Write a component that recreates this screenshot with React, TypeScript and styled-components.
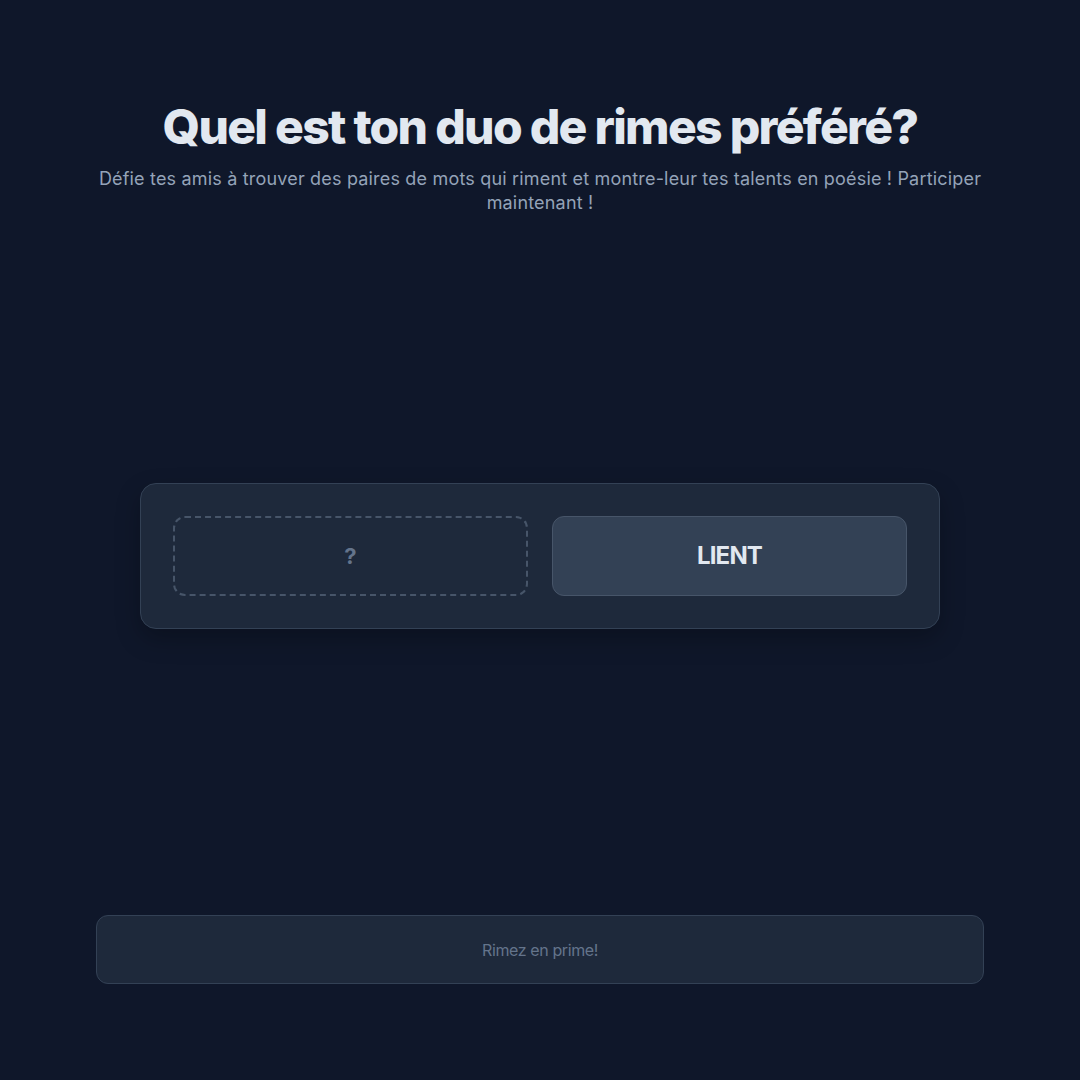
import React from "react";
import styled, { createGlobalStyle } from "styled-components";

const Global = createGlobalStyle`
  html, body { margin: 0; padding: 0; background: #0f172a; }
  body { font-family: Inter, "Noto Sans", sans-serif; }
  * { box-sizing: border-box; }
`;

const Page = styled.div`
  min-height: 1080px;
  display: flex;
  flex-direction: column;
  padding: 97px 96px 96px;
`;

const Header = styled.header`
  display: flex;
  flex-direction: column;
  align-items: center;
  text-align: center;
  gap: 10px;
`;

const Title = styled.h1`
  margin: 0;
  font-size: 48px;
  line-height: 60px;
  font-weight: 800;
  letter-spacing: -1.7px;
  color: #e2e8f0;
`;

const Subtitle = styled.p`
  margin: 0;
  font-size: 18px;
  line-height: 24px;
  letter-spacing: 0.18px;
  color: #94a3b8;
`;

const Main = styled.main`
  flex: 1;
  display: flex;
  align-items: center;
  justify-content: center;
  padding-bottom: 19px;
`;

const Card = styled.div`
  width: 800px;
  padding: 32px;
  display: grid;
  grid-template-columns: 1fr 1fr;
  gap: 24px;
  background: #1e293b;
  border: 1px solid #334155;
  border-radius: 16px;
  box-shadow: 0 10px 25px rgba(0, 0, 0, 0.25);
`;

const Slot = styled.div<{ $filled?: boolean }>`
  height: 80px;
  display: flex;
  align-items: center;
  justify-content: center;
  border-radius: 12px;
  font-weight: 700;
  background: ${(p) => (p.$filled ? "#334155" : "#1e293b")};
  border: ${(p) => (p.$filled ? "1px solid #475569" : "2px dashed #475569")};
  color: ${(p) => (p.$filled ? "#e2e8f0" : "#64748b")};
  font-size: ${(p) => (p.$filled ? "24px" : "22px")};
  letter-spacing: ${(p) => (p.$filled ? "-0.8px" : "0")};
`;

const Footer = styled.footer`
  height: 69px;
  display: flex;
  align-items: center;
  justify-content: center;
  background: #1e293b;
  border: 1px solid #334155;
  border-radius: 12px;
  font-size: 16px;
  letter-spacing: -0.4px;
  color: #64748b;
`;

export default function App() {
  return (
    <>
      <Global />
      <Page>
        <Header>
          <Title>Quel est ton duo de rimes préféré?</Title>
          <Subtitle>
            Défie tes amis à trouver des paires de mots qui riment et montre-leur tes talents en poésie ! Participer maintenant !
          </Subtitle>
        </Header>
        <Main>
          <Card>
            <Slot>?</Slot>
            <Slot $filled>LIENT</Slot>
          </Card>
        </Main>
        <Footer>Rimez en prime!</Footer>
      </Page>
    </>
  );
}
